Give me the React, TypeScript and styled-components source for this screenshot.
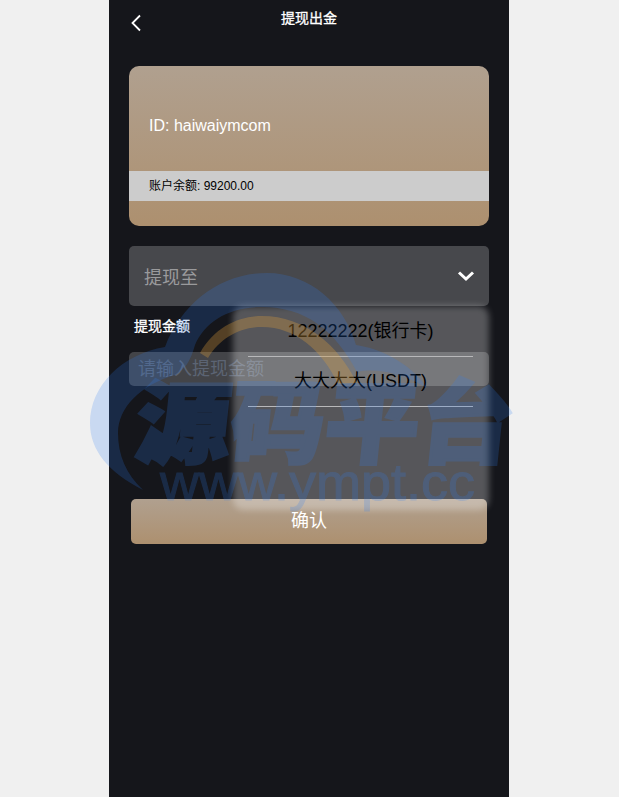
import styled, { createGlobalStyle } from 'styled-components';

const GlobalStyle = createGlobalStyle`
  html, body {
    margin: 0;
    padding: 0;
    background: #f0f0f0;
  }
  body {
    font-family: 'Liberation Sans', 'Noto Sans CJK SC', sans-serif;
  }
`;

const Page = styled.div`
  position: relative;
  width: 400px;
  min-height: 797px;
  margin-left: 109px;
  padding: 0 20px;
  box-sizing: border-box;
  background: #15161b;
  display: flex;
  flex-direction: column;
`;

const Header = styled.header`
  position: relative;
  height: 36px;
  padding-bottom: 2px;
  box-sizing: border-box;
  margin-bottom: 30px;
  display: flex;
  align-items: center;
  justify-content: center;
`;

const BackButton = styled.span`
  position: absolute;
  left: 1px;
  top: 14px;
  width: 14px;
  height: 18px;
  color: #fff;
`;

const Title = styled.h1`
  margin: 0;
  font-size: 14px;
  font-weight: 400;
  color: #fff;
  -webkit-text-stroke: 0.3px #fff;
`;

const BalanceCard = styled.section`
  height: 160px;
  border-radius: 10px;
  background: linear-gradient(#b0a08f, #ad906f);
  display: flex;
  flex-direction: column;
`;

const CardId = styled.div`
  height: 105px;
  padding: 51px 20px 0;
  box-sizing: border-box;
  font-size: 16px;
  line-height: 18px;
  color: #fff;
`;

const BalanceBand = styled.div`
  height: 30px;
  padding: 0 20px;
  background: #cccccc;
  font-size: 12px;
  line-height: 30px;
  color: #000;
`;

const SelectBox = styled.div`
  height: 60px;
  margin-top: 20px;
  padding: 0 14px 0 15px;
  border-radius: 5px;
  background: #47484c;
  display: flex;
  align-items: center;
  justify-content: space-between;
  font-size: 18px;
  color: #9a9a9c;
`;

const FieldLabel = styled.label`
  height: 46px;
  padding-left: 5px;
  font-size: 14px;
  line-height: 40px;
  color: #fff;
  -webkit-text-stroke: 0.3px #fff;
`;

const AmountInput = styled.input`
  height: 34px;
  padding: 0 9px;
  border: 0;
  border-radius: 5px;
  box-sizing: border-box;
  outline: none;
  background: #434448;
  font-family: inherit;
  font-size: 18px;
  &::placeholder {
    color: #5c6474;
    opacity: 1;
  }
`;

const ConfirmButton = styled.button`
  height: 45px;
  margin: 113px 2px 0;
  padding: 0 0 5px;
  border: 0;
  border-radius: 5px;
  background: linear-gradient(#b0a08f, #ad906f);
  font-family: inherit;
  font-size: 18px;
  color: #fff;
`;

const Dropdown = styled.div`
  position: absolute;
  left: 124px;
  top: 306px;
  width: 256px;
  height: 204px;
  padding: 0 16px 0 15px;
  box-sizing: border-box;
  isolation: isolate;

  &::before {
    content: '';
    position: absolute;
    inset: 0;
    z-index: -1;
    border-radius: 10px;
    background: rgba(255, 255, 255, 0.28);
    filter: blur(3px);
  }
`;

const DropdownItem = styled.div`
  height: 50px;
  border-bottom: 1px solid #b8b8ba;
  box-sizing: content-box;
  margin-bottom: -1px;
  text-align: center;
  font-size: 18px;
  line-height: 50px;
  color: #000;
`;

const Watermark = styled.svg`
  position: absolute;
  left: -109px;
  top: 0;
  width: 619px;
  height: 797px;
  overflow: hidden;
  pointer-events: none;
`;

const MarkTitle = styled.text`
  font-family: 'Noto Sans CJK SC', sans-serif;
  font-size: 90px;
  font-weight: 900;
  fill: #2f7ff3;
  stroke: #2f7ff3;
  stroke-width: 3px;
`;

const MarkUrl = styled.text`
  font-family: 'Liberation Sans', sans-serif;
  font-size: 52px;
  font-weight: 400;
  fill: #2f7ff3;
  stroke: #2f7ff3;
  stroke-width: 1px;
`;

const App = () => {
  return (
    <>
      <GlobalStyle />
      <Page>
        <Header>
          <BackButton>
            <svg width="14" height="18" viewBox="0 0 14 18" fill="none">
              <path d="M10 1.5 L2.5 9 L10 16.5" stroke="currentColor" strokeWidth="1.8" />
            </svg>
          </BackButton>
          <Title>提现出金</Title>
        </Header>
        <BalanceCard>
          <CardId>ID: haiwaiymcom</CardId>
          <BalanceBand>账户余额: 99200.00</BalanceBand>
        </BalanceCard>
        <SelectBox>
          提现至
          <svg width="18" height="12" viewBox="0 0 18 12" fill="none">
            <path d="M2 2.5 L9 9 L16 2.5" stroke="#fff" strokeWidth="3" />
          </svg>
        </SelectBox>
        <FieldLabel>提现金额</FieldLabel>
        <AmountInput placeholder="请输入提现金额" />
        <ConfirmButton>确认</ConfirmButton>
        <Dropdown>
          <DropdownItem>12222222(银行卡)</DropdownItem>
          <DropdownItem>大大大大(USDT)</DropdownItem>
        </Dropdown>
        <Watermark viewBox="0 0 619 797">
          <path
            fill="#2f7ff3"
            fillOpacity="0.2"
            d="M143 490 C108 472 90 450 90 423 C90 386 122 354 165 347 C182 302 222 273 267 273 C310 273 345 305 356 345 C378 348 410 362 427 388 C400 372 375 368 357 372 C335 330 305 307 262 307 C228 307 205 322 195 345 C190 362 186 368 175 375 C140 385 118 408 118 433 C118 455 126 474 143 490 Z"
          />
          <path
            fill="#d99a3a"
            fillOpacity="0.32"
            d="M200 353 C215 326 240 316 262 316 C305 316 338 345 357 383 L338 384 C322 350 295 327 262 327 C240 327 220 338 208 358 Z"
          />
          <g opacity="0.2">
            <g transform="translate(133 456) skewX(-6)">
              <MarkTitle x="0" y="0" textLength="378" lengthAdjust="spacingAndGlyphs">
                源码平台
              </MarkTitle>
            </g>
            <MarkUrl x="160" y="500" textLength="315" lengthAdjust="spacingAndGlyphs">
              www.ympt.cc
            </MarkUrl>
          </g>
        </Watermark>
      </Page>
    </>
  );
};

export default App;
